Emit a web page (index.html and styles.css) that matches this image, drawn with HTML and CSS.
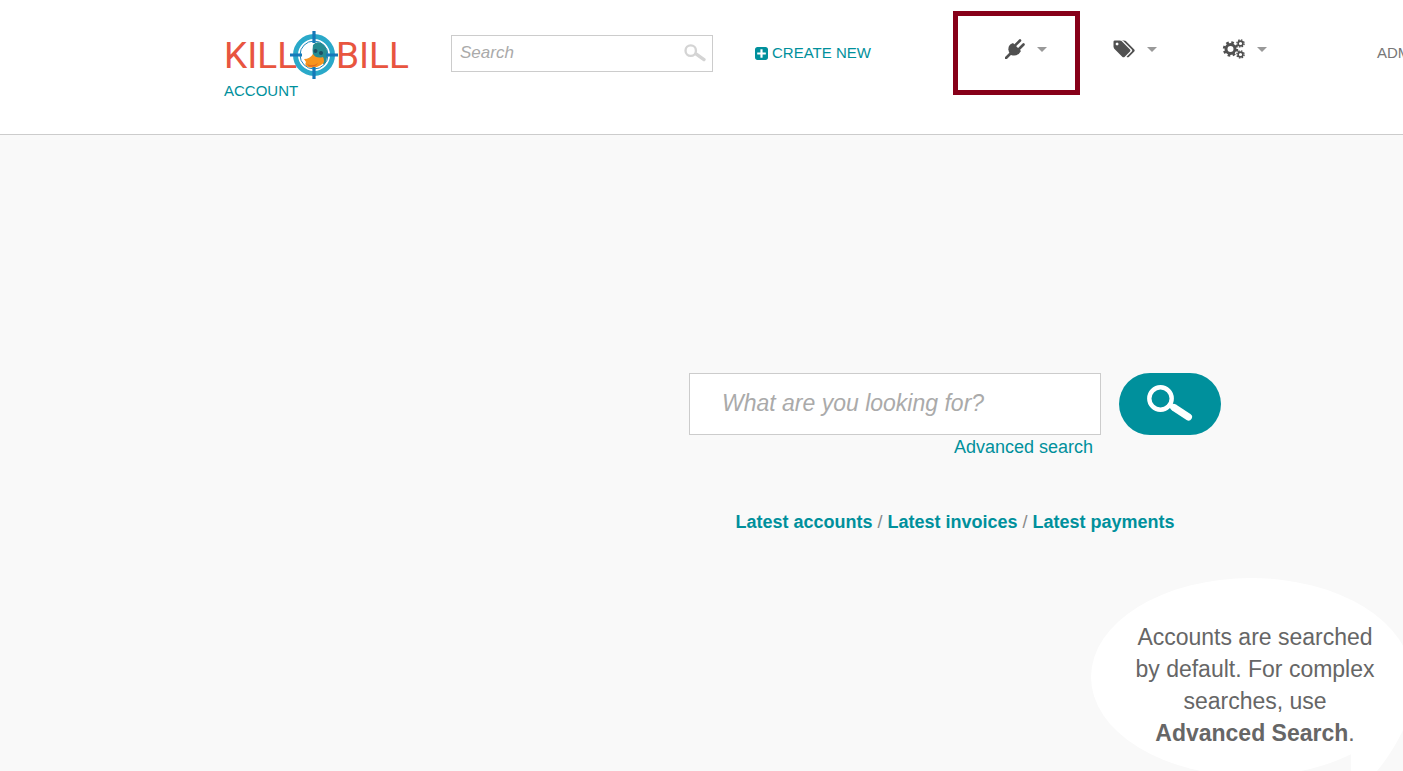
FILE: index.html
```html
<!DOCTYPE html>
<html lang="en">
<head>
<meta charset="utf-8">
<title>Kill Bill</title>
<link rel="stylesheet" href="styles.css">
</head>
<body>
<header class="header">
  <div class="brand">
    <a href="#" class="logo" aria-label="Kill Bill">
      <span>KILL</span>
      <svg class="duck" viewBox="0 0 48 48" aria-hidden="true">
        <circle cx="24" cy="24" r="18.500" fill="#fff" stroke="#2aa9c9" stroke-width="5"/>
        <circle cx="24" cy="24" r="14" fill="#fff" stroke="#1d87bd" stroke-width="1"/>
        <path d="M23 14Q26 10 31 12Q38 16 37.500 24Q37 30 34 34L31 29Q26 29 23 25Q22 19 23 14Z" fill="#268c91"/>
        <path d="M23 23Q26 28 33 26Q36 31 31 34Q25 38 18 36Q14 34 16 31L14 28Q20 28 23 23Z" fill="#f7941e"/>
        <path d="M17 33Q23 36 28 32Q25 37 19 35.500Z" fill="#df6b24"/>
        <circle cx="25.500" cy="20" r="2" fill="#1b4f64"/>
        <circle cx="31" cy="22" r="2" fill="#1b4f64"/>
        <path d="M24 0V12M24 36V48M0 24H12M36 24H48" stroke="#1578b8" stroke-width="3.200"/>
      </svg>
      <span>BILL</span>
    </a>
    <a href="#" class="link">ACCOUNT</a>
  </div>
  <form class="quick-search">
    <input type="search" placeholder="Search" aria-label="Search">
    <button type="button" aria-label="Go">
      <svg viewBox="0 0 46 38" aria-hidden="true"><circle cx="14" cy="14" r="11" fill="none" stroke="currentColor" stroke-width="5"/><path d="M25 21L42 33" stroke="currentColor" stroke-width="7" stroke-linecap="round"/></svg>
    </button>
  </form>
  <a href="#" class="link create">
    <svg viewBox="128 128 1536 1536" aria-hidden="true"><path fill="currentColor" d="M1408 960v-128q0-26-19-45t-45-19h-320v-320q0-26-19-45t-45-19h-128q-26 0-45 19t-19 45v320h-320q-26 0-45 19t-19 45v128q0 26 19 45t45 19h320v320q0 26 19 45t45 19h128q26 0 45-19t19-45v-320h320q26 0 45-19t19-45zm256-544v960q0 119-84.500 203.500t-203.500 84.500h-960q-119 0-203.500-84.500t-84.500-203.500v-960q0-119 84.500-203.500t203.500-84.500h960q119 0 203.500 84.500t84.500 203.500z"/></svg>
    CREATE NEW
  </a>
  <nav class="menus" aria-label="Tools">
    <button type="button" class="menu highlighted" aria-label="Plugins">
      <svg class="icon" viewBox="0 0 20 20" aria-hidden="true"><path d="M8 4L16 12Q13 18 6 16Q2 12 4 7Q5 5 8 4Z"/><path d="M9.500 7L15 1.500M13 11L18.500 5.500M6 14L1 19" fill="none" stroke="currentColor" stroke-width="2.600" stroke-linecap="round"/></svg>
      <span class="caret"></span>
    </button>
    <button type="button" class="menu" aria-label="Tags">
      <svg class="icon wide" viewBox="0 0 2048 1792" aria-hidden="true"><path d="M576 448q0-53-37.500-90.500t-90.500-37.500-90.500 37.500-37.500 90.500 37.500 90.500 90.500 37.500 90.500-37.500 37.500-90.500zm1067 576q0 53-37 90l-491 492q-39 37-91 37-53 0-90-37l-715-716q-38-37-64.500-101t-26.500-117v-416q0-52 38-90t90-38h416q53 0 117 26.500t102 64.500l715 714q37 39 37 91zm384 0q0 53-37 90l-491 492q-39 37-91 37-36 0-59-14t-53-45l470-470q37-37 37-90 0-52-37-91l-715-714q-38-38-102-64.500t-117-26.500h224q53 0 117 26.500t102 64.500l715 714q37 39 37 91z"/></svg>
      <span class="caret"></span>
    </button>
    <button type="button" class="menu" aria-label="Settings">
      <svg class="icon wide" viewBox="0 0 23 20" aria-hidden="true">
        <g fill="none" stroke="currentColor">
          <circle cx="8.500" cy="10" r="4.500" stroke-width="3"/>
          <circle cx="8.500" cy="10" r="6.500" stroke-width="2.400" stroke-dasharray="2.600 2.505"/>
          <circle cx="18.500" cy="4.500" r="2.400" stroke-width="1.600"/>
          <circle cx="18.500" cy="4.500" r="3.600" stroke-width="1.400" stroke-dasharray="1.500 1.327"/>
          <circle cx="18.500" cy="15.500" r="2.400" stroke-width="1.600"/>
          <circle cx="18.500" cy="15.500" r="3.600" stroke-width="1.400" stroke-dasharray="1.500 1.327"/>
        </g>
      </svg>
      <span class="caret"></span>
    </button>
  </nav>
  <a href="#" class="user">ADMIN</a>
</header>
<main class="main">
  <section class="finder">
    <form class="search-row">
      <div class="field">
        <input type="search" placeholder="What are you looking for?" aria-label="What are you looking for?">
        <a href="#" class="advanced">Advanced search</a>
      </div>
      <button type="button" aria-label="Search">
        <svg viewBox="0 0 46 38" aria-hidden="true"><circle cx="13.500" cy="14.500" r="11.200" fill="none" stroke="currentColor" stroke-width="4.400"/><path d="M27 23.500L41.500 33" stroke="currentColor" stroke-width="7" stroke-linecap="round"/><path d="M21 20L28 24.500" stroke="currentColor" stroke-width="5"/></svg>
      </button>
    </form>
    <p class="latest"><a href="#">Latest accounts</a> / <a href="#">Latest invoices</a> / <a href="#">Latest payments</a></p>
  </section>
  <aside class="bubble">
    <svg class="tail" viewBox="0 0 70 100" aria-hidden="true"><path d="M0 20V100Q12 100 26 81Q52 50 68 0H40Z" fill="#fff"/></svg>
    <p>Accounts are searched by default. For complex searches, use <strong>Advanced Search</strong>.</p>
  </aside>
</main>
</body>
</html>
```
FILE: styles.css
```css
*, *::before, *::after { box-sizing: border-box; }
body {
  margin: 0;
  height: 100vh;
  overflow: hidden;
  display: flex;
  flex-direction: column;
  background: #f9f9f9;
  color: #666;
  font-family: "Liberation Sans", Arial, sans-serif;
}
a { color: #00909c; text-decoration: none; }
button { font: inherit; border: 0; background: none; padding: 0; cursor: pointer; }
input { font: inherit; border: 1px solid #ccc; border-radius: 0; background: #fff; outline: 0; appearance: none; }
input::placeholder { color: #aaa; font-style: italic; opacity: 1; }
svg { display: block; }

.header {
  flex: none;
  display: flex;
  align-items: flex-start;
  height: 135px;
  padding: 31px 0 0 224px;
  background: #fff;
  border-bottom: 1px solid #ccc;
  font-size: 15px;
  white-space: nowrap;
}
.header > * { flex: none; }
.brand { width: 227px; }
.logo {
  display: flex;
  width: 186px;
  height: 47px;
  color: #e8553f;
  font: 400 37px/50px Roboto, sans-serif;
}
.logo span { width: 70px; }
.duck { position: relative; flex: none; width: 48px; height: 48px; margin: 0 -2px 0 -4px; }
.link { line-height: 18px; }
.brand .link { display: block; padding-top: 4px; }
.quick-search { position: relative; width: 262px; padding-top: 4px; }
.quick-search input { width: 100%; height: 37px; padding: 0 40px 2px 8px; font-size: 17px; }
.quick-search button { position: absolute; right: 7px; top: 13px; color: #d4d4d4; }
.quick-search svg { width: 22px; height: 18px; }
.create { display: flex; align-items: center; gap: 4px; width: 198px; margin-left: 42px; padding-top: 13px; }
.create svg { width: 13px; height: 13px; }
.menus { display: flex; }
.menu {
  position: relative;
  display: flex;
  align-items: center;
  justify-content: center;
  gap: 12px;
  width: 110px;
  height: 36px;
  padding-right: 2px;
  color: #505050;
}
.menu.highlighted { width: 127px; padding: 0 0 0 18px; }
.menu.highlighted::after {
  content: "";
  position: absolute;
  inset: -20px 0 auto 0;
  height: 84px;
  border: 5px solid #870019;
}
.icon { width: 20px; height: 20px; fill: currentColor; }
.icon.wide { width: 23px; }
.caret { border: 5px solid transparent; border-top-color: #999; border-bottom: 0; }
.user { margin-left: 77px; padding-top: 13px; line-height: 18px; color: #777; }

.main { flex: 1; min-height: 0; }
.finder {
  display: flex;
  flex-direction: column;
  align-items: center;
  padding: 238px 0 0 507px;
  font-size: 18px;
}
.search-row { display: flex; align-items: flex-start; gap: 18px; }
.field { display: flex; flex-direction: column; width: 412px; }
.field input { height: 62px; padding: 0 32px 2px; font-size: 23px; }
.advanced { align-self: flex-end; padding: 2px 8px 0 0; line-height: 20px; }
.search-row button {
  display: flex;
  justify-content: center;
  width: 102px;
  height: 62px;
  padding-top: 11px;
  border-radius: 31px;
  background: #00909c;
  color: #fff;
}
.search-row svg { width: 46px; height: 38px; }
.latest { margin: 54px 0 0; line-height: 22px; color: #888; }
.latest a { font-weight: bold; }
.bubble {
  position: relative;
  width: 320px;
  height: 198px;
  margin: 45px 0 0 1091px;
  padding: 43px 36px 0 44px;
  border-radius: 50%;
  background: #fff;
  font-size: 23px;
  line-height: 32px;
  text-align: center;
}
.bubble p { position: relative; margin: 0; }
.tail { position: absolute; left: 260px; top: 112px; width: 70px; height: 100px; }
```
